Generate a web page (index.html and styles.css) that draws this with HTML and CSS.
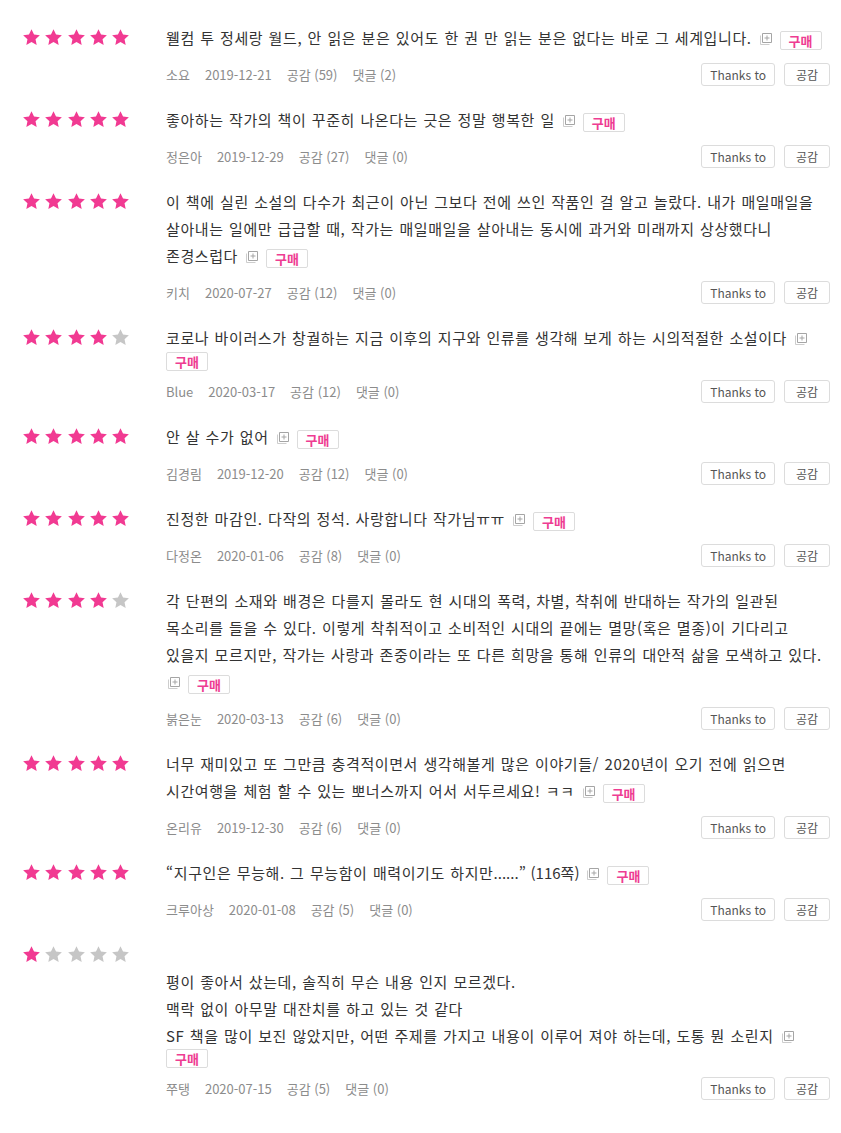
FILE: index.html
```html
<!DOCTYPE html>
<html lang="ko">
<head>
<meta charset="utf-8">
<title>리뷰</title>
<link rel="stylesheet" href="styles.css">
</head>
<body>
<svg class="defs" width="0" height="0" aria-hidden="true">
  <defs>
    <symbol id="star" viewBox="0 0 20 20"><path d="M10 1.2l2.65 5.6 6.15.75-4.55 4.2 1.2 6.05L10 14.8l-5.45 3 1.2-6.05L1.2 7.55l6.15-.75z"/></symbol>
    <symbol id="more" viewBox="0 0 13 12"><path d="M3.5 0.5h9v9h-9z M8 2.5v5 M5.5 5h5" fill="none" stroke="#a5a5a5" stroke-width="1"/><path d="M1.5 2.5v9h9" fill="none" stroke="#cdcdcd" stroke-width="1"/></symbol>
  </defs>
</svg>

<div class="list">

  <div class="review">
    <div class="stars"><svg class="on"><use href="#star"/></svg><svg class="on"><use href="#star"/></svg><svg class="on"><use href="#star"/></svg><svg class="on"><use href="#star"/></svg><svg class="on"><use href="#star"/></svg></div>
    <div class="body">
      <div class="comment"><span class="text">웰컴 투 정세랑 월드, 안 읽은 분은 있어도 한 권 만 읽는 분은 없다는 바로 그 세계입니다.<svg class="more"><use href="#more"/></svg></span><span class="tag">구매</span></div>
      <div class="meta">
        <div class="info"><span>소요</span><span>2019-12-21</span><span>공감 (59)</span><span>댓글 (2)</span></div>
        <div class="btns"><button class="btn">Thanks to</button><button class="btn">공감</button></div>
      </div>
    </div>
  </div>

  <div class="review">
    <div class="stars"><svg class="on"><use href="#star"/></svg><svg class="on"><use href="#star"/></svg><svg class="on"><use href="#star"/></svg><svg class="on"><use href="#star"/></svg><svg class="on"><use href="#star"/></svg></div>
    <div class="body">
      <div class="comment"><span class="text">좋아하는 작가의 책이 꾸준히 나온다는 긋은 정말 행복한 일<svg class="more"><use href="#more"/></svg></span><span class="tag">구매</span></div>
      <div class="meta">
        <div class="info"><span>정은아</span><span>2019-12-29</span><span>공감 (27)</span><span>댓글 (0)</span></div>
        <div class="btns"><button class="btn">Thanks to</button><button class="btn">공감</button></div>
      </div>
    </div>
  </div>

  <div class="review">
    <div class="stars"><svg class="on"><use href="#star"/></svg><svg class="on"><use href="#star"/></svg><svg class="on"><use href="#star"/></svg><svg class="on"><use href="#star"/></svg><svg class="on"><use href="#star"/></svg></div>
    <div class="body">
      <div class="comment"><span class="text">이 책에 실린 소설의 다수가 최근이 아닌 그보다 전에 쓰인 작품인 걸 알고 놀랐다. 내가 매일매일을<br>살아내는 일에만 급급할 때, 작가는 매일매일을 살아내는 동시에 과거와 미래까지 상상했다니<br>존경스럽다<svg class="more"><use href="#more"/></svg></span><span class="tag">구매</span></div>
      <div class="meta">
        <div class="info"><span>키치</span><span>2020-07-27</span><span>공감 (12)</span><span>댓글 (0)</span></div>
        <div class="btns"><button class="btn">Thanks to</button><button class="btn">공감</button></div>
      </div>
    </div>
  </div>

  <div class="review">
    <div class="stars"><svg class="on"><use href="#star"/></svg><svg class="on"><use href="#star"/></svg><svg class="on"><use href="#star"/></svg><svg class="on"><use href="#star"/></svg><svg class="off"><use href="#star"/></svg></div>
    <div class="body">
      <div class="comment"><span class="text">코로나 바이러스가 창궐하는 지금 이후의 지구와 인류를 생각해 보게 하는 시의적절한 소설이다<svg class="more"><use href="#more"/></svg></span><br><span class="tag tag-solo">구매</span></div>
      <div class="meta">
        <div class="info"><span>Blue</span><span>2020-03-17</span><span>공감 (12)</span><span>댓글 (0)</span></div>
        <div class="btns"><button class="btn">Thanks to</button><button class="btn">공감</button></div>
      </div>
    </div>
  </div>

  <div class="review">
    <div class="stars"><svg class="on"><use href="#star"/></svg><svg class="on"><use href="#star"/></svg><svg class="on"><use href="#star"/></svg><svg class="on"><use href="#star"/></svg><svg class="on"><use href="#star"/></svg></div>
    <div class="body">
      <div class="comment"><span class="text">안 살 수가 없어<svg class="more"><use href="#more"/></svg></span><span class="tag">구매</span></div>
      <div class="meta">
        <div class="info"><span>김경림</span><span>2019-12-20</span><span>공감 (12)</span><span>댓글 (0)</span></div>
        <div class="btns"><button class="btn">Thanks to</button><button class="btn">공감</button></div>
      </div>
    </div>
  </div>

  <div class="review">
    <div class="stars"><svg class="on"><use href="#star"/></svg><svg class="on"><use href="#star"/></svg><svg class="on"><use href="#star"/></svg><svg class="on"><use href="#star"/></svg><svg class="on"><use href="#star"/></svg></div>
    <div class="body">
      <div class="comment"><span class="text">진정한 마감인. 다작의 정석. 사랑합니다 작가님ㅠㅠ<svg class="more"><use href="#more"/></svg></span><span class="tag">구매</span></div>
      <div class="meta">
        <div class="info"><span>다정온</span><span>2020-01-06</span><span>공감 (8)</span><span>댓글 (0)</span></div>
        <div class="btns"><button class="btn">Thanks to</button><button class="btn">공감</button></div>
      </div>
    </div>
  </div>

  <div class="review">
    <div class="stars"><svg class="on"><use href="#star"/></svg><svg class="on"><use href="#star"/></svg><svg class="on"><use href="#star"/></svg><svg class="on"><use href="#star"/></svg><svg class="off"><use href="#star"/></svg></div>
    <div class="body">
      <div class="comment"><span class="text">각 단편의 소재와 배경은 다를지 몰라도 현 시대의 폭력, 차별, 착취에 반대하는 작가의 일관된<br>목소리를 들을 수 있다. 이렇게 착취적이고 소비적인 시대의 끝에는 멸망(혹은 멸종)이 기다리고<br>있을지 모르지만, 작가는 사랑과 존중이라는 또 다른 희망을 통해 인류의 대안적 삶을 모색하고 있다.<br><svg class="more more-first"><use href="#more"/></svg></span><span class="tag">구매</span></div>
      <div class="meta">
        <div class="info"><span>붉은눈</span><span>2020-03-13</span><span>공감 (6)</span><span>댓글 (0)</span></div>
        <div class="btns"><button class="btn">Thanks to</button><button class="btn">공감</button></div>
      </div>
    </div>
  </div>

  <div class="review">
    <div class="stars"><svg class="on"><use href="#star"/></svg><svg class="on"><use href="#star"/></svg><svg class="on"><use href="#star"/></svg><svg class="on"><use href="#star"/></svg><svg class="on"><use href="#star"/></svg></div>
    <div class="body">
      <div class="comment"><span class="text">너무 재미있고 또 그만큼 충격적이면서 생각해볼게 많은 이야기들/ 2020년이 오기 전에 읽으면<br>시간여행을 체험 할 수 있는 뽀너스까지 어서 서두르세요! ㅋㅋ<svg class="more"><use href="#more"/></svg></span><span class="tag">구매</span></div>
      <div class="meta">
        <div class="info"><span>온리유</span><span>2019-12-30</span><span>공감 (6)</span><span>댓글 (0)</span></div>
        <div class="btns"><button class="btn">Thanks to</button><button class="btn">공감</button></div>
      </div>
    </div>
  </div>

  <div class="review">
    <div class="stars"><svg class="on"><use href="#star"/></svg><svg class="on"><use href="#star"/></svg><svg class="on"><use href="#star"/></svg><svg class="on"><use href="#star"/></svg><svg class="on"><use href="#star"/></svg></div>
    <div class="body">
      <div class="comment"><span class="text">“지구인은 무능해. 그 무능함이 매력이기도 하지만<span class="latin">......” (116쪽)</span><svg class="more"><use href="#more"/></svg></span><span class="tag">구매</span></div>
      <div class="meta">
        <div class="info"><span>크루아상</span><span>2020-01-08</span><span>공감 (5)</span><span>댓글 (0)</span></div>
        <div class="btns"><button class="btn">Thanks to</button><button class="btn">공감</button></div>
      </div>
    </div>
  </div>

  <div class="review">
    <div class="stars"><svg class="on"><use href="#star"/></svg><svg class="off"><use href="#star"/></svg><svg class="off"><use href="#star"/></svg><svg class="off"><use href="#star"/></svg><svg class="off"><use href="#star"/></svg></div>
    <div class="body">
      <div class="comment"><span class="text"><br>평이 좋아서 샀는데, 솔직히 무슨 내용 인지 모르겠다.<br>맥락 없이 아무말 대잔치를 하고 있는 것 같다<br>SF 책을 많이 보진 않았지만, 어떤 주제를 가지고 내용이 이루어 져야 하는데, 도통 뭔 소린지<svg class="more"><use href="#more"/></svg></span><br><span class="tag tag-solo">구매</span></div>
      <div class="meta">
        <div class="info"><span>쭈탱</span><span>2020-07-15</span><span>공감 (5)</span><span>댓글 (0)</span></div>
        <div class="btns"><button class="btn">Thanks to</button><button class="btn">공감</button></div>
      </div>
    </div>
  </div>

</div>
</body>
</html>
```

FILE: styles.css
```css
html, body {
  margin: 0;
  padding: 0;
  background: #fff;
}
body {
  font-family: "Noto Sans CJK KR", "Noto Sans", sans-serif;
  color: #333;
}
.defs {
  position: absolute;
  width: 0;
  height: 0;
  overflow: hidden;
}
.list {
  padding: 14px 11px 0 22px;
}
.review {
  display: flex;
  padding: 10px 0 10px;
}
.stars {
  flex: 0 0 144px;
  display: flex;
  align-items: center;
  height: 27px;
}
.stars svg {
  width: 19px;
  height: 19px;
  margin-right: 3.3px;
}
.stars svg.on { fill: #f13a92; }
.stars svg.off { fill: #c6c6c6; }
.body {
  flex: 1;
  min-width: 0;
}
.comment {
  font-size: 12px;
  line-height: 15px;
}
.text {
  font-size: 15px;
  line-height: 27px;
  letter-spacing: 0.6px;
  word-spacing: 0.6px;
  color: #333;
}
.latin {
  letter-spacing: 0;
}
.more {
  width: 13px;
  height: 12px;
  vertical-align: -1px;
  margin-left: 7px;
}
.more-first {
  margin-left: 1px;
}
.tag {
  display: inline-block;
  box-sizing: border-box;
  height: 19px;
  line-height: 17px;
  padding: 0 8px;
  border: 1px solid #dcdcdc;
  border-radius: 2px;
  font-size: 13px;
  font-weight: 700;
  color: #ee3d92;
  vertical-align: middle;
  margin-left: 8px;
}
.tag-solo {
  margin: -2px 0 -3px 0;
}
.meta {
  display: flex;
  align-items: center;
  justify-content: space-between;
  margin-top: 12px;
}
.info {
  display: flex;
  gap: 15px;
  font-size: 13px;
  color: #8c8c8c;
}
.btns {
  display: flex;
  gap: 9px;
}
.btn {
  box-sizing: border-box;
  height: 23px;
  min-width: 46px;
  padding: 0 8px;
  border: 1px solid #dcdcdc;
  border-radius: 3px;
  background: #fff;
  font-family: "Noto Sans CJK KR", "Noto Sans", sans-serif;
  font-size: 12px;
  color: #555;
  line-height: 21px;
}
```
